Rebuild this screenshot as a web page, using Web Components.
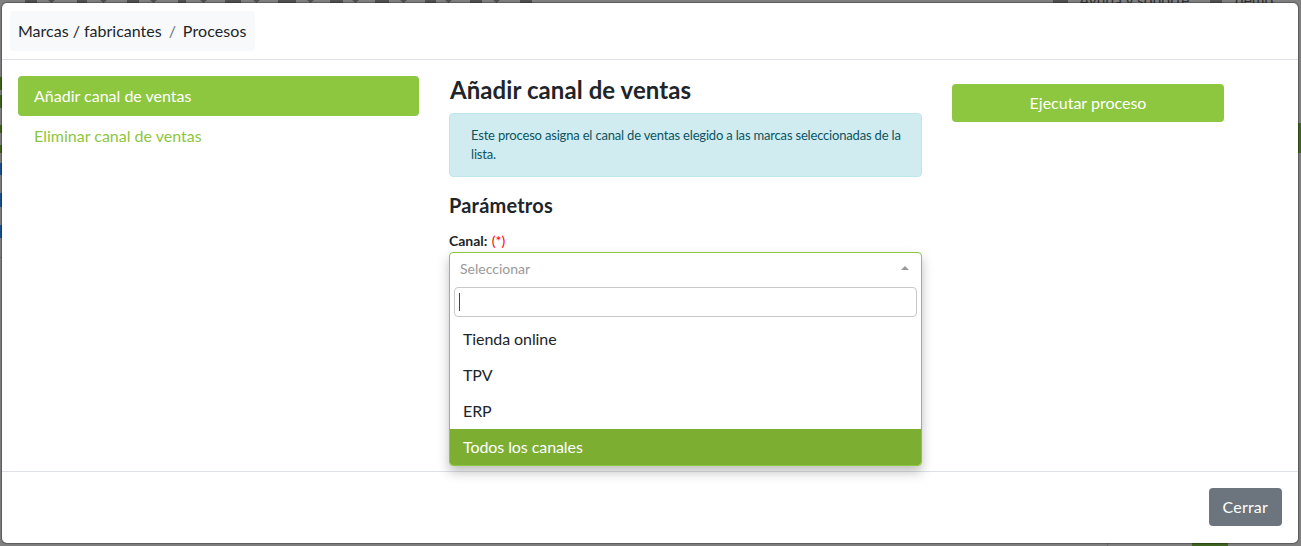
<!DOCTYPE html>
<html lang="es">
<head>
<meta charset="utf-8">
<title>Procesos</title>
<style>
  html, body { margin: 0; height: 100%; overflow: hidden; }
  body { font-family: Lato, "Liberation Sans", sans-serif; font-size: 16px; color: #212529; }
</style>
</head>
<body>
<app-backdrop>
  <process-modal>
    <crumb-bar slot="header"></crumb-bar>
    <side-nav slot="nav"></side-nav>
    <process-form slot="main"></process-form>
    <action-button slot="aside" wide>Ejecutar proceso</action-button>
    <action-button slot="footer" kind="secondary">Cerrar</action-button>
  </process-modal>
</app-backdrop>

<script>
  class AppBackdrop extends HTMLElement {
    connectedCallback() {
      const shadow = this.attachShadow({ mode: "open" });
      // bits of the page behind the modal, only their edges show
      const icons = [[25, 12], [77, 10], [127, 12], [178, 8], [225, 16], [278, 18], [330, 13], [375, 14], [425, 11], [470, 12], [520, 12]];
      const arrows = [48, 100, 150, 200, 253, 307, 352, 400, 445, 493];
      const bits = (list, cls, style) => list.map(v => `<i class="${cls}" style="${style(v)}"></i>`).join("");
      shadow.innerHTML = `
      <style>
        :host { display: block; position: relative; width: 1301px; height: 546px; box-sizing: border-box;
          padding: 3px 3px 3px 2px; background: #808080; overflow: hidden; }
        .bit { position: absolute; top: 0; height: 3px; background: #505050; }
        .arrow { position: absolute; top: 0; width: 7px; height: 3px; background: #505050; clip-path: polygon(0 0, 100% 0, 50% 100%); }
        .green { position: absolute; background: #3f6321; }
        .blue { position: absolute; background: #1f4f8f; }
        .top { position: absolute; top: -9px; font: 15.5px Lato, sans-serif; color: #333; white-space: nowrap; }
        .line { position: absolute; background: #6e6e6e; }
      </style>
      ${bits(icons, "bit", v => `left:${v[0]}px;width:${v[1]}px`)}
      ${bits(arrows, "arrow", v => `left:${v}px`)}
      <span class="top" style="left:1079px">Ayuda y soporte</span>
      <span class="top" style="left:1235px">demo</span>
      <i class="bit" style="left:1053px;width:15px"></i>
      <i class="bit" style="left:1210px;width:12px"></i>
      <i class="green" style="left:0;top:77px;width:2px;height:13px"></i>
      <i class="green" style="left:0;top:95px;width:2px;height:13px"></i>
      <i class="green" style="left:0;top:125px;width:2px;height:8px"></i>
      <i class="green" style="left:0;top:145px;width:2px;height:8px"></i>
      <i class="blue" style="left:0;top:163px;width:2px;height:12px"></i>
      <i class="blue" style="left:0;top:193px;width:2px;height:14px"></i>
      <i class="blue" style="left:0;top:225px;width:2px;height:13px"></i>
      <i class="line" style="left:0;top:257px;width:2px;height:1px"></i>
      <i class="green" style="left:1298px;top:123px;width:3px;height:30px"></i>
      <i class="green" style="left:1192px;top:543px;width:36px;height:3px"></i>
      <i class="line" style="left:1107px;top:543px;width:1px;height:3px"></i>
      <slot></slot>`;
    }
  }

  class ProcessModal extends HTMLElement {
    connectedCallback() {
      const shadow = this.attachShadow({ mode: "open" });
      shadow.innerHTML = `
      <style>
        :host { display: flex; flex-direction: column; position: relative; height: 100%; background: #fff;
          border-radius: 5px; box-shadow: 0 0 1px 1px rgba(0,0,0,.3); overflow: hidden; }
        header { height: 57px; box-sizing: border-box; padding: 8px 8px 0; border-bottom: 1px solid #dee2e6; flex: none; }
        .body { flex: 1; display: flex; padding: 16px 16px 0; min-height: 0; }
        .nav { width: 401px; flex: none; }
        .main { width: 473px; flex: none; margin-left: 30px; }
        .aside { width: 272px; flex: none; margin-left: 30px; padding-top: 8px; }
        footer { height: 72px; box-sizing: border-box; border-top: 1px solid #dee2e6; flex: none;
          display: flex; justify-content: flex-end; align-items: flex-start; padding: 16px 16px 0 0; }
      </style>
      <header><slot name="header"></slot></header>
      <div class="body">
        <div class="nav"><slot name="nav"></slot></div>
        <div class="main"><slot name="main"></slot></div>
        <div class="aside"><slot name="aside"></slot></div>
      </div>
      <footer><slot name="footer"></slot></footer>`;
    }
  }

  class CrumbBar extends HTMLElement {
    connectedCallback() {
      const shadow = this.attachShadow({ mode: "open" });
      shadow.innerHTML = `
      <style>
        :host { display: inline-flex; align-items: center; height: 40px; box-sizing: border-box; padding: 0 8px 2px 8px; background: #f8f9fa;
          border-radius: 4px; font-size: 16px; color: #212529; white-space: nowrap; }
        .sep { color: #6c757d; padding: 0 7px; }
        .cur { letter-spacing: .1px; }
      </style>
      <span>Marcas / fabricantes</span><span class="sep">/</span><span class="cur">Procesos</span>`;
    }
  }

  class SideNav extends HTMLElement {
    connectedCallback() {
      const shadow = this.attachShadow({ mode: "open" });
      shadow.innerHTML = `
      <style>
        :host { display: flex; flex-direction: column; font-size: 16px; }
        a { display: block; height: 40px; line-height: 40px; padding: 0 16px; border-radius: 4px; color: #8dc63f;
          text-decoration: none; }
        a.active { background: #8dc63f; color: #fff; }
      </style>
      <a class="active" href="#">Añadir canal de ventas</a>
      <a href="#">Eliminar canal de ventas</a>`;
    }
  }

  class ProcessForm extends HTMLElement {
    connectedCallback() {
      const shadow = this.attachShadow({ mode: "open" });
      shadow.innerHTML = `
      <style>
        :host { display: block; color: #212529; }
        h3 { margin: -1px 0 0; padding-left: 1px; font-size: 24px; font-weight: 700; line-height: 29px; letter-spacing: .08px; }
        .info { margin-top: 9px; height: 64px; box-sizing: border-box; padding: 12px 20px 12px 21px; background: #d1ecf1;
          border: 1px solid #bee5eb; border-radius: 4px; color: #0c5460; font-size: 13px; line-height: 19px; letter-spacing: -.18px; }
        h4 { margin: 16px 0 0; font-size: 20px; font-weight: 700; line-height: 24px; letter-spacing: .2px; }
        label { display: block; margin-top: 15px; font-size: 14px; font-weight: 700; line-height: 17px; }
        label span { color: #f00; font-weight: 400; margin-left: 1px; }
        channel-select { margin-top: 3px; }
      </style>
      <h3>Añadir canal de ventas</h3>
      <div class="info">Este proceso asigna el canal de ventas elegido a las marcas seleccionadas de la lista.</div>
      <h4>Parámetros</h4>
      <label>Canal: <span>(*)</span></label>
      <channel-select placeholder="Seleccionar">
        <select-option>Tienda online</select-option>
        <select-option>TPV</select-option>
        <select-option>ERP</select-option>
        <select-option active>Todos los canales</select-option>
      </channel-select>`;
    }
  }

  class ChannelSelect extends HTMLElement {
    connectedCallback() {
      const shadow = this.attachShadow({ mode: "open" });
      shadow.innerHTML = `
      <style>
        :host { display: block; position: relative; height: 34px; }
        .box { position: absolute; inset: 0 0 auto 0; box-sizing: border-box; border: 1px solid #8dc63f; border-radius: 4px;
          background: #fff; box-shadow: 0 6px 12px rgba(0,0,0,.25); overflow: hidden; }
        .head { height: 30px; display: flex; align-items: center; justify-content: space-between; padding: 0 12px 0 10px;
          box-sizing: border-box; font-size: 14px; color: #999; }
        .caret { width: 0; height: 0; border: 4px solid transparent; border-top: 0; border-bottom-color: #999; }
        .search { margin: 4px 4px 0; height: 30px; box-sizing: border-box; border: 1px solid #c8c8c8; border-radius: 4px;
          display: flex; align-items: center; padding-left: 4px; }
        .cursor { width: 1px; height: 18px; background: #444; }
        .list { margin-top: 4px; }
      </style>
      <div class="box">
        <div class="head"><span>${this.getAttribute("placeholder")}</span><i class="caret"></i></div>
        <div class="search"><i class="cursor"></i></div>
        <div class="list"><slot></slot></div>
      </div>`;
    }
  }

  class SelectOption extends HTMLElement {
    connectedCallback() {
      const shadow = this.attachShadow({ mode: "open" });
      const active = this.hasAttribute("active");
      shadow.innerHTML = `
      <style>
        :host { display: block; height: 36px; line-height: 36px; padding-left: 13px; font-size: 16px; letter-spacing: -.08px;
          color: ${active ? "#fff" : "#212529"}; background: ${active ? "#7cae32" : "transparent"}; }
      </style>
      <slot></slot>`;
    }
  }

  class ActionButton extends HTMLElement {
    connectedCallback() {
      const shadow = this.attachShadow({ mode: "open" });
      const secondary = this.getAttribute("kind") === "secondary";
      shadow.innerHTML = `
      <style>
        :host { display: ${this.hasAttribute("wide") ? "flex" : "inline-flex"}; align-items: center; justify-content: center;
          height: 38px; padding: 0 ${secondary ? "14px" : "13px"} 2px; box-sizing: border-box; border-radius: 4px; font-size: 16px; color: #fff;
          letter-spacing: ${secondary ? ".2px" : "0"}; background: ${secondary ? "#6c757d" : "#8dc63f"}; }
      </style>
      <slot></slot>`;
    }
  }

  customElements.define("app-backdrop", AppBackdrop);
  customElements.define("process-modal", ProcessModal);
  customElements.define("crumb-bar", CrumbBar);
  customElements.define("side-nav", SideNav);
  customElements.define("process-form", ProcessForm);
  customElements.define("channel-select", ChannelSelect);
  customElements.define("select-option", SelectOption);
  customElements.define("action-button", ActionButton);
</script>
</body>
</html>
